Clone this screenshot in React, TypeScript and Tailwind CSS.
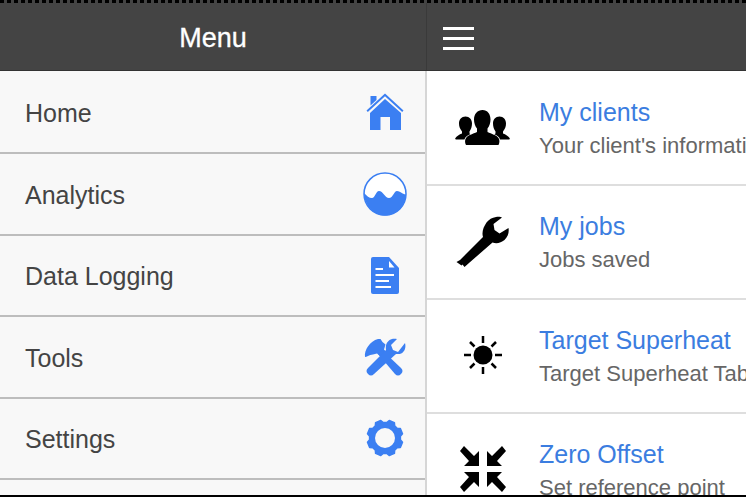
import type { ReactNode } from 'react'

const font = "font-['Liberation_Sans',Arial,sans-serif]"

function HomeIcon() {
  return (
    <svg width="38" height="38" viewBox="0 0 38 38" fill="#3b7ff2">
      <path d="M4.500 3h6v4l-6 5.500z" />
      <path d="M0.500 17.500 19 0.500l18.500 17-1.300 1.400L19 3.300 1.800 18.900z" />
      <path d="M19 6 35 20v17H24V24H14.500v13H4V20z" />
    </svg>
  )
}

function WaveIcon() {
  return (
    <svg width="44" height="44" viewBox="0 0 44 44">
      <circle cx="22" cy="22" r="21" fill="#fff" stroke="#3b7ff2" strokeWidth="1.500" />
      <path
        d="M1 21C4 24 6 26 9 26C12 26 13 19 16 19C20 19 22 26 26 26C30 26 31 19 34 19C37 19 39 22 43 22.500C43 34 33 43.500 22 43.500S1 33 1 21z"
        fill="#3b7ff2"
      />
    </svg>
  )
}

function DocIcon() {
  return (
    <svg width="28" height="37" viewBox="0 0 28 37">
      <path d="M2 0h16l10 11v24a2 2 0 0 1-2 2H2a2 2 0 0 1-2-2V2a2 2 0 0 1 2-2z" fill="#3b7ff2" />
      <path d="M18 4v6.500h5.500z" fill="#fff" />
      <path d="M4.500 12H12M4.500 18H23M4.500 24H18M4.500 30H20" stroke="#fff" strokeWidth="2" fill="none" />
    </svg>
  )
}

function ToolsIcon() {
  return (
    <svg width="42" height="38" viewBox="0 0 42 38" fill="#3b7ff2">
      <path d="M1 19C0 12 6 3 14 1l2.500 0 2 3 3 2.500-1.500 5 2 2L16 18l-3-2.500-4 1C5 17 2.500 19 1 19z" />
      <path d="M14 16 18 12 37 30c2 2 2 4 0 6s-4 2-6 0z" />
      <path d="M41 5c1.500 5-1 11-7 11l-2 0L10 36c-2 2-4 2-6 0s-2-4 0-6l18-18c-1-6 2-10 6-11 2-.5 4 0 5 0l-6 6 2 5 5 2z" />
    </svg>
  )
}

// eight teeth, turned so that none points straight up
function gearPath() {
  const pt = (r: number, deg: number) => {
    const a = (deg * Math.PI) / 180
    return `${(19 + r * Math.cos(a)).toFixed(2)} ${(19 + r * Math.sin(a)).toFixed(2)}`
  }
  let d = ''
  for (let k = 0; k < 8; k++) {
    const c = 22.5 + k * 45
    d += `${k === 0 ? 'M' : 'L'}${pt(15.5, c - 16)}L${pt(18, c - 9)}L${pt(18, c + 9)}L${pt(15.5, c + 16)}`
  }
  return d + 'z'
}

function GearIcon() {
  return (
    <svg width="38" height="38" viewBox="0 0 38 38">
      <path d={gearPath()} fill="#3b7ff2" stroke="#3b7ff2" strokeWidth="1.500" strokeLinejoin="round" />
      <circle cx="19" cy="19" r="10" fill="#f8f8f8" />
    </svg>
  )
}

const sidePerson =
  'M10.500 6.500c4 0 6.500 3 6.500 7 0 3-1 6-2.500 8v2l2 1.500-6 4.500H1c-.7 0-1-.5-.7-1.200C1.500 26 4.500 24.500 7 23.500v-2C5 19 4 16.500 4 13.500c0-4 2.500-7 6.500-7z'

function ClientsIcon() {
  return (
    <svg width="56" height="36" viewBox="0 0 56 36" fill="#000">
      <path d={sidePerson} />
      <path d={sidePerson} transform="matrix(-1 0 0 1 55 0)" />
      <path
        d="M27.500 0c5 0 8 4 8 9.500 0 3.500-1.200 7-3 9v3.500c4 2 9 3 11 6 1.500 2.500 1 5 0 7H11c-1-2-1.500-4.500 0-7 2-3 7-4 11-6v-3.500c-1.800-2-3-5.500-3-9C19 4 22.500 0 27.500 0z"
        stroke="#fff"
        strokeWidth="1.500"
        paintOrder="stroke"
      />
    </svg>
  )
}

function WrenchIcon() {
  return (
    <svg width="54" height="52" viewBox="0 0 54 52" fill="#000">
      <path d="M40 1c3-.5 5 0 6 .5l-8.500 6.500 1 6 5 3.500 9-5.500c.8 4-.5 9-4 12-3.500 3-8 4-12 2.500L13 47l-4.500 4-2-2.500-1 1-5-3.500 3.500-2L27 21c-1.500-5 .5-10 3.500-14.500C33 3.500 36 1.500 40 1z" />
    </svg>
  )
}

function SunIcon() {
  return (
    <svg width="40" height="40" viewBox="0 0 40 40" fill="none" className="-mt-[2px]">
      <circle cx="20" cy="20" r="9.500" fill="#000" />
      <path
        d="M20 1v7M20 32v7M1 20h7M32 20h7M7 7l4.500 4.500M28.500 28.500 33 33M33 7l-4.500 4.500M11.500 28.500 7 33"
        stroke="#000"
        strokeWidth="2.500"
      />
    </svg>
  )
}

function CompressIcon() {
  return (
    <svg width="46" height="46" viewBox="0 0 46 46" fill="#000" className="-mt-[2px]">
      <path d="M4 0 14 10l5-5v15H4l5-5L0 5z" />
      <path d="M42 0 32 10l-5-5v15h15l-5-5 9-10z" />
      <path d="M4 46 14 36l5 5V26H4l5 5-9 10z" />
      <path d="M42 46 32 36l-5 5V26h15l-5 5 9 10z" />
    </svg>
  )
}

const menuItems: { label: string; icon: ReactNode }[] = [
  { label: 'Home', icon: <HomeIcon /> },
  { label: 'Analytics', icon: <WaveIcon /> },
  { label: 'Data Logging', icon: <DocIcon /> },
  { label: 'Tools', icon: <ToolsIcon /> },
  { label: 'Settings', icon: <GearIcon /> },
]

const listItems: { title: string; sub: string; icon: ReactNode }[] = [
  { title: 'My clients', sub: "Your client's information", icon: <ClientsIcon /> },
  { title: 'My jobs', sub: 'Jobs saved', icon: <WrenchIcon /> },
  { title: 'Target Superheat', sub: 'Target Superheat Table', icon: <SunIcon /> },
  { title: 'Zero Offset', sub: 'Set reference point', icon: <CompressIcon /> },
]

export default function App() {
  return (
    <div className={`relative h-[497px] w-[746px] overflow-hidden bg-white ${font}`}>
      <div className="h-[3px] bg-[repeating-linear-gradient(90deg,#000_0_4px,#444_4px_7px)]" />
      <div className="flex h-[68px] border-b border-[#333] bg-[#444444] text-white">
        <div className="flex w-[427px] items-center justify-center border-r border-[#3a3a3a] pt-[4px] text-[27px] [-webkit-text-stroke:0.3px_white]">
          Menu
        </div>
        <div className="flex flex-col justify-center gap-[7px] pl-[16px] pt-[3px]">
          <span className="h-[3px] w-[31px] bg-white" />
          <span className="h-[3px] w-[31px] bg-white" />
          <span className="h-[3px] w-[31px] bg-white" />
        </div>
      </div>
      <div className="flex">
        <ul className="w-[427px] shrink-0 border-r-2 border-[#d6d6d6] bg-[#f8f8f8] pt-[1.500px]">
          {menuItems.map((m) => (
            <li
              key={m.label}
              className="flex h-[81.500px] items-center justify-between border-b-2 border-[#bdbdbd] pl-[25px] text-[25px] text-[#444]"
            >
              <span className="pt-[3px]">{m.label}</span>
              <span className="mr-[18px] flex w-[44px] justify-center">{m.icon}</span>
            </li>
          ))}
        </ul>
        <ul className="flex-1 overflow-hidden pt-[1px]">
          {listItems.map((it) => (
            <li key={it.title} className="flex h-[114px] items-center border-b-2 border-[#dedede]">
              <span className="flex w-[112px] shrink-0 justify-center">{it.icon}</span>
              <div className="whitespace-nowrap pt-[2px]">
                <div className="text-[25px] leading-[33px] text-[#3b7de0]">{it.title}</div>
                <div className="text-[22px] leading-[33px] text-[#666]">{it.sub}</div>
              </div>
            </li>
          ))}
        </ul>
      </div>
      <div className="absolute bottom-0 left-0 h-[2px] w-full bg-black" />
    </div>
  )
}
